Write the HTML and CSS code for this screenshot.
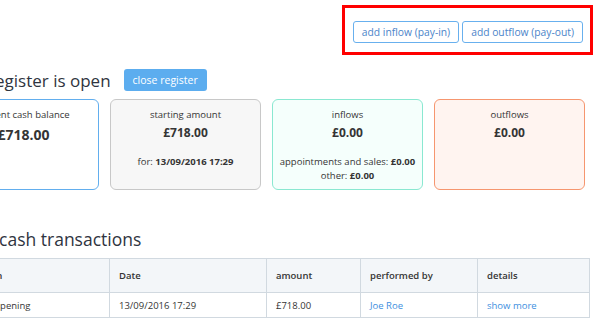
FILE: index.html
```html
<!DOCTYPE html>
<html lang="en">
<head>
    <meta charset="UTF-8">
    <meta name="viewport" content="width=device-width, initial-scale=1.0">
    <title>Cash register</title>
    <link rel="stylesheet" href="styles.css">
</head>
<body>
    <div class="page">
        <!-- pay-in / pay-out actions -->
        <div class="top-bar">
            <div class="actions">
                <a href="#" class="btn btn-outline">add inflow (pay-in)</a>
                <a href="#" class="btn btn-outline">add outflow (pay-out)</a>
            </div>
        </div>

        <div class="title-row">
            <h2 class="title">Cash register is open</h2>
            <a href="#" class="btn btn-primary">close register</a>
        </div>

        <div class="cards">
            <div class="card card-current">
                <div class="card-label">current cash balance</div>
                <div class="card-amount big">£718.00</div>
            </div>
            <div class="card card-start">
                <div class="card-label">starting amount</div>
                <div class="card-amount">£718.00</div>
                <div class="card-note">for: <b>13/09/2016 17:29</b></div>
            </div>
            <div class="card card-in">
                <div class="card-label">inflows</div>
                <div class="card-amount">£0.00</div>
                <div class="card-note">appointments and sales: <b>£0.00</b><br>other: <b>£0.00</b></div>
            </div>
            <div class="card card-out">
                <div class="card-label">outflows</div>
                <div class="card-amount">£0.00</div>
            </div>
        </div>

        <h3 class="subtitle">Latest cash transactions</h3>

        <table class="transactions">
            <thead>
                <tr>
                    <th class="col-item">cash item</th>
                    <th class="col-date">Date</th>
                    <th class="col-amount">amount</th>
                    <th class="col-user">performed by</th>
                    <th class="col-details">details</th>
                </tr>
            </thead>
            <tbody>
                <tr>
                    <td>register opening</td>
                    <td>13/09/2016 17:29</td>
                    <td>£718.00</td>
                    <td><a href="#">Joe Roe</a></td>
                    <td><a href="#">show more</a></td>
                </tr>
            </tbody>
        </table>
    </div>
</body>
</html>
```

FILE: styles.css
```css
body {
    margin: 0;
    padding: 0;
    font-family: 'Open Sans', 'Liberation Sans', sans-serif;
    color: #353535;
    background: #fff;
    overflow: hidden;
}

a {
    text-decoration: none;
}

.page {
    width: 641px;
    margin-left: -52px;
}

/* top bar */
.top-bar {
    display: flex;
    justify-content: flex-end;
    padding-top: 5px;
}

.actions {
    display: flex;
    gap: 3px;
    margin-right: -4px;
    padding: 13px 7px 9px 8px;
    border: 3px solid #ff0000;
}

.btn {
    display: inline-flex;
    align-items: center;
    height: 22px;
    box-sizing: border-box;
    padding: 0 8px;
    border-radius: 3px;
    font-size: 10.3px;
    line-height: 1;
}

.btn-outline {
    border: 1px solid #68b0ee;
    color: #4b84c9;
    background: #fff;
}

.btn-primary {
    background: #5cadef;
    color: #fff;
    font-size: 10.5px;
    padding: 0 9px;
}

/* title */
.title-row {
    display: flex;
    align-items: center;
    gap: 13px;
    margin-top: 14px;
    height: 22px;
}

.title {
    margin: 0 0 0 -3px;
    font-size: 17px;
    font-weight: 400;
    color: #2f3440;
}

/* summary cards */
.cards {
    display: flex;
    gap: 11px;
    margin-top: 8px;
}

.card {
    width: 151px;
    height: 91px;
    box-sizing: border-box;
    border: 1px solid #ccc;
    border-radius: 6px;
    text-align: center;
    padding-top: 9px;
}

.card-label {
    font-size: 9.5px;
    line-height: 12px;
}

.card-amount {
    font-size: 12px;
    font-weight: 700;
    line-height: 16px;
    margin-top: 4px;
}

.card-amount.big {
    font-size: 14px;
    line-height: 18px;
    margin-top: 5px;
}

.card-note {
    font-size: 9.5px;
    line-height: 14px;
    margin-top: 14px;
}

.card-current {
    border-color: #62aeee;
    background: #fff;
}

.card-start {
    border-color: #c8c8c8;
    background: #f7f7f7;
}

.card-in {
    border-color: #8ae8d1;
    background: #f5fffc;
}

.card-out {
    border-color: #f6966f;
    background: #fff4f0;
}

/* transactions */
.subtitle {
    margin: 38px 0 0 -3px;
    font-size: 17.5px;
    font-weight: 400;
    line-height: 22px;
    color: #2f3440;
}

.transactions {
    margin-top: 8px;
    width: 641px;
    border-collapse: collapse;
    font-size: 9.5px;
    table-layout: fixed;
}

.transactions th,
.transactions td {
    border: 1px solid #d1d9e0;
    text-align: left;
    padding: 0 9px;
}

.transactions th {
    height: 33px;
    background: #f3f6f9;
    font-weight: 600;
}

.transactions td {
    height: 24px;
}

.transactions a {
    color: #3d8fe0;
}

.col-item { width: 142px; }
.col-date { width: 138px; }
.col-amount { width: 75px; }
.col-user { width: 98px; }
.col-details { width: 93px; }
```
